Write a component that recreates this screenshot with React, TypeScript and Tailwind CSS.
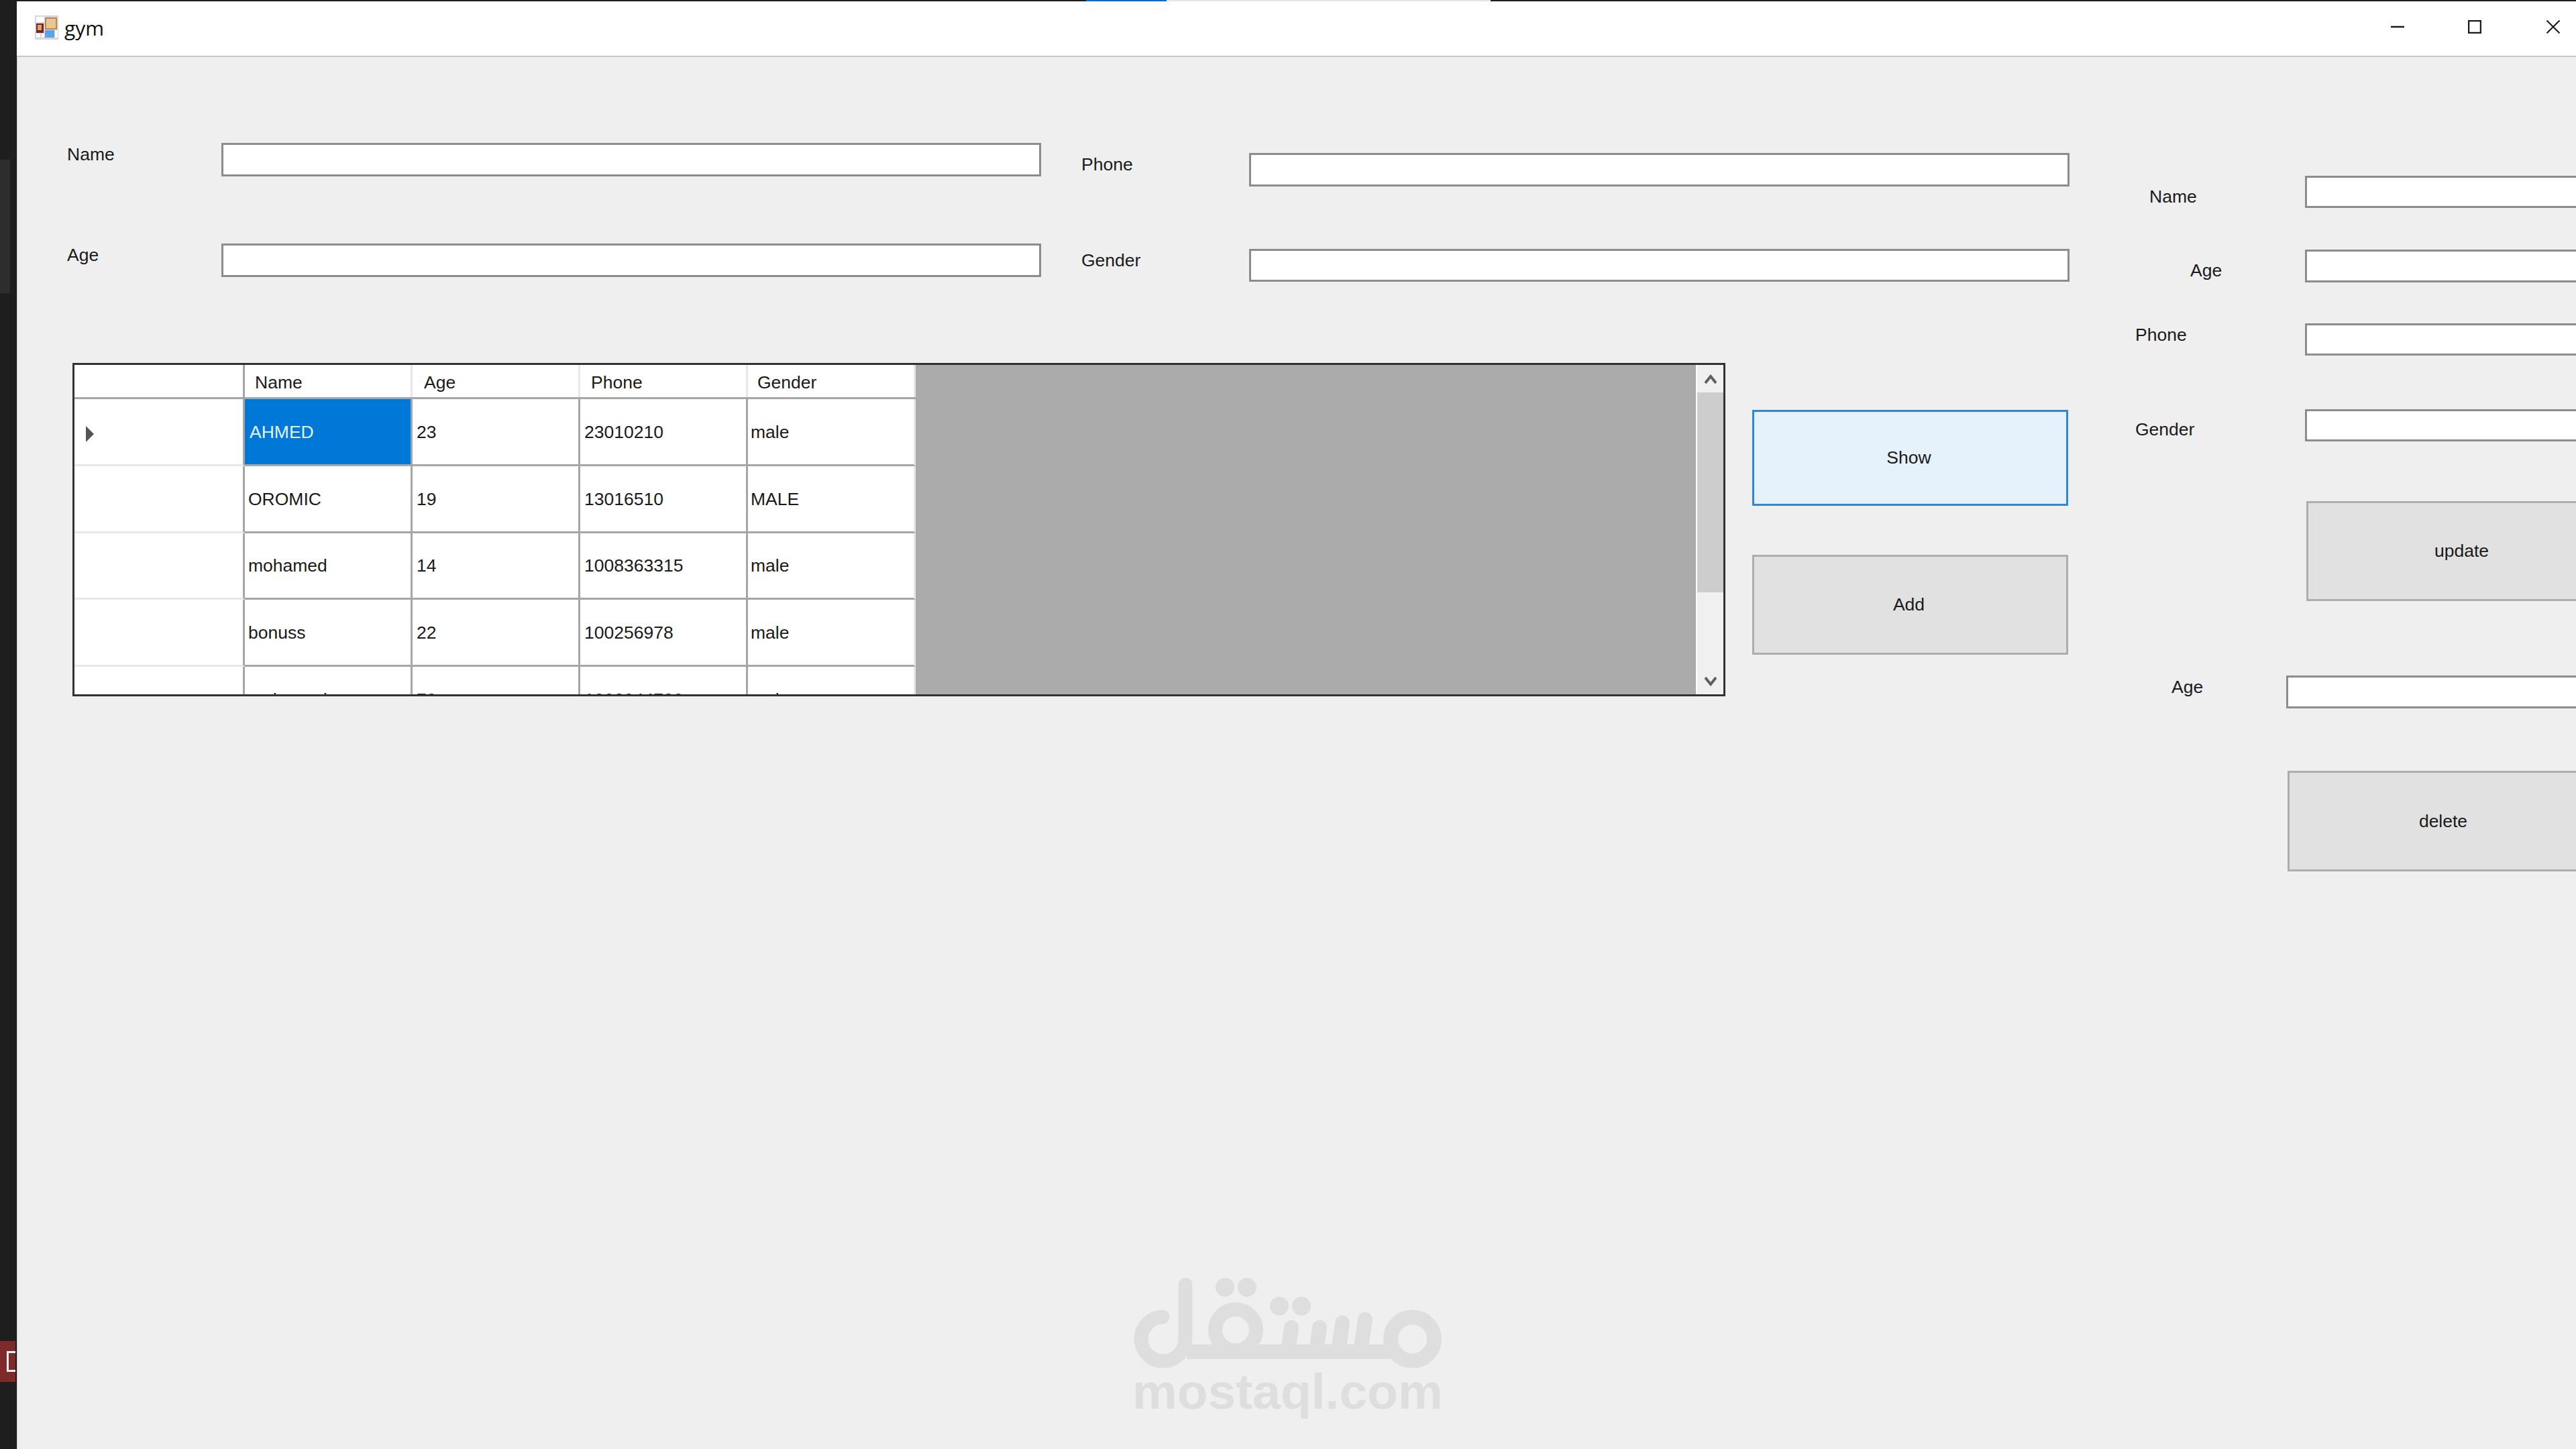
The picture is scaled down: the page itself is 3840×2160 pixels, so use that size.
import React from "react";

const students = [
  { name: "AHMED", age: "23", phone: "23010210", gender: "male" },
  { name: "OROMIC", age: "19", phone: "13016510", gender: "MALE" },
  { name: "mohamed", age: "14", phone: "1008363315", gender: "male" },
  { name: "bonuss", age: "22", phone: "100256978", gender: "male" },
  { name: "mohamed", age: "70", phone: "1002044780", gender: "male" },
];

const AppIcon = () => (
  <svg width="35" height="36" viewBox="0 0 35 36" className="ml-[27px] mb-[4px] shrink-0">
    <rect width="35" height="36" fill="#d6d6d6" />
    <rect x="2" y="2" width="12" height="8" fill="#ffffff" />
    <rect x="15" y="3" width="18" height="18" fill="#b98a4c" />
    <rect x="17" y="5" width="14" height="14" fill="#e9c795" />
    <rect x="2" y="12" width="11" height="14" fill="#7b2323" />
    <rect x="4" y="14" width="6" height="8" fill="#d9a866" />
    <rect x="15" y="22" width="14" height="11" fill="#5aa5ea" />
    <rect x="2" y="27" width="6" height="6" fill="#ffffff" />
    <rect x="10" y="27" width="4" height="6" fill="#ffffff" />
    <rect x="30" y="22" width="4" height="11" fill="#ffffff" />
  </svg>
);

const Logo = () => (
  <svg width="460" height="134" viewBox="0 0 460 134" fill="none" stroke="#dedede" aria-label="مستقل">
    <rect x="80" y="99" width="305" height="22" fill="#dedede" stroke="none" />
    <circle cx="416.5" cy="91" r="32.5" strokeWidth="22" />
    <circle cx="153" cy="77.5" r="30.5" strokeWidth="21" />
    <path d="M44 58 A33 33 0 1 0 78 91 L78 10" strokeWidth="21" strokeLinecap="round" />
    <path d="M236 74 L232 104" strokeWidth="22" strokeLinecap="round" />
    <path d="M278 74 L274 104" strokeWidth="22" strokeLinecap="round" />
    <path d="M312 67 L307 104" strokeWidth="22" strokeLinecap="round" />
    <path d="M346 62 L340 104" strokeWidth="22" strokeLinecap="round" />
    <g fill="#dedede" stroke="none">
      <circle cx="137" cy="14" r="14" />
      <circle cx="170" cy="14" r="14" />
      <circle cx="218" cy="42" r="14" />
      <circle cx="251" cy="42" r="14" />
    </g>
  </svg>
);

const ScrollArrow = ({ down }: { down?: boolean }) => (
  <svg width="18" height="15" viewBox="0 0 18 15" fill="none" stroke="#606060" strokeWidth="4">
    <polyline points={down ? "1,2 9,12 17,2" : "1,13 9,3 17,13"} />
  </svg>
);

const DataGrid = () => (
  <div className="flex w-[2464px] h-[497px] border-[3px] border-[#333333] overflow-hidden shrink-0 bg-[#ababab]">
    <div className="w-[1254px] shrink-0 bg-white">
      <div className="flex h-[51px] border-b-[3px] border-[#a6a6a6]">
        <div className="w-[254px] border-r-[3px] border-[#a6a6a6]" />
        <div className="w-[250px] pl-[15px] pt-[4px] flex items-center border-r-[3px] border-[#e8e8e8]">Name</div>
        <div className="w-[250px] pl-[17px] pt-[4px] flex items-center border-r-[3px] border-[#e8e8e8]">Age</div>
        <div className="w-[250px] pl-[16px] pt-[4px] flex items-center border-r-[3px] border-[#e8e8e8]">Phone</div>
        <div className="w-[250px] pl-[14px] pt-[4px] flex items-center border-r-[3px] border-[#e8e8e8]">Gender</div>
      </div>
      {students.map((s, index) => (
        <div className="flex h-[99.75px] shrink-0" key={index}>
          <div className="w-[254px] flex items-center pl-[17px] pt-[7px] border-r-[3px] border-b-[3px] border-r-[#a6a6a6] border-b-[#e8e8e8]">
            {index === 0 && (
              <svg width="12" height="24" viewBox="0 0 12 24">
                <polygon points="0,0 12,12 0,24" fill="#555555" />
              </svg>
            )}
          </div>
          {index === 0 ? (
            <div className="w-[250px] flex items-center pl-[7px] pt-[2px] bg-[#0078d7] text-[#e6f2fb] border-r-[3px] border-b-[3px] border-[#a6a6a6]">
              {s.name}
            </div>
          ) : (
            <div className="w-[250px] flex items-center pl-[5px] pt-[2px] border-r-[3px] border-b-[3px] border-[#a6a6a6]">
              {s.name}
            </div>
          )}
          <div className="w-[250px] flex items-center pl-[6px] pt-[2px] border-r-[3px] border-b-[3px] border-[#a6a6a6]">{s.age}</div>
          <div className="w-[250px] flex items-center pl-[6px] pt-[2px] border-r-[3px] border-b-[3px] border-[#a6a6a6]">{s.phone}</div>
          <div className="w-[250px] flex items-center pl-[4px] pt-[2px] border-r-[3px] border-b-[3px] border-r-[#e8e8e8] border-b-[#a6a6a6]">{s.gender}</div>
        </div>
      ))}
    </div>
    <div className="flex-1" />
    <div className="w-[41px] shrink-0 flex flex-col bg-[#f0f0f0] border-l-2 border-white">
      <div className="h-[41px] flex items-center justify-center pt-[2px]">
        <ScrollArrow />
      </div>
      <div className="h-[298px] bg-[#cdcdcd]" />
      <div className="flex-1" />
      <div className="h-[41px] flex items-center justify-center pt-[1px]">
        <ScrollArrow down />
      </div>
    </div>
  </div>
);

const App = () => {
  return (
    <div className="flex w-[3840px] h-[2160px] overflow-hidden bg-[#1e1e1e] text-[26.5px] leading-[35px] text-[#1a1a1a] font-['Liberation_Sans',sans-serif]">
      {/* editor behind the window */}
      <div className="w-[25px] shrink-0 flex flex-col pt-[238px]">
        <div className="w-[15px] h-[199px] bg-[#2d2d2d]" />
        <div className="mt-[1562px] w-[23px] h-[61px] bg-[#7f2a2a] flex items-center justify-end">
          <div className="w-[13px] h-[31px] border-[3px] border-r-0 border-[#f0f0f0]" />
        </div>
      </div>

      <div className="flex-1 flex flex-col min-w-0">
        <div className="h-[2px] shrink-0 flex pl-[1594px]">
          <div className="w-[120px] h-[3px] bg-[#0a6cd0]" />
          <div className="w-[483px] h-[3px] bg-[#e5e5e5]" />
        </div>

        {/* title bar */}
        <div className="h-[83px] shrink-0 flex items-center bg-white border-b-2 border-[#c6c6c6]">
          <AppIcon />
          <span className="ml-[9px] mb-[2px] text-[30px] text-[#111111] font-['Open_Sans',sans-serif]">gym</span>
          <div className="ml-auto mb-[6px] flex items-center gap-[95px] pr-[24px]">
            <svg width="20" height="20" viewBox="0 0 20 20" stroke="#1a1a1a" strokeWidth="2.5">
              <line x1="0" y1="10" x2="20" y2="10" />
            </svg>
            <svg width="20" height="20" viewBox="0 0 20 20" fill="none" stroke="#1a1a1a" strokeWidth="2.5">
              <rect x="1" y="1" width="18" height="18" />
            </svg>
            <svg width="20" height="20" viewBox="0 0 20 20" stroke="#1a1a1a" strokeWidth="2" className="ml-[2px]">
              <line x1="0.5" y1="0.5" x2="19.5" y2="19.5" />
              <line x1="19.5" y1="0.5" x2="0.5" y2="19.5" />
            </svg>
          </div>
        </div>

        {/* form */}
        <div className="relative flex-1 flex bg-[#efefef] border-l border-[#c8c8c8] overflow-hidden">
          <div className="w-[3059px] shrink-0 flex flex-col">
            <div className="flex h-[335px] shrink-0">
              <div className="w-[1526px] shrink-0 pl-[74px] pt-[128px]">
                <div className="flex">
                  <label className="w-[230px]">Name</label>
                  <div className="w-[1222px] h-[50px] bg-white border-[3px] border-[#8c8c8c]" />
                </div>
                <div className="flex mt-[100px]">
                  <label className="w-[230px]">Age</label>
                  <div className="w-[1222px] h-[50px] bg-white border-[3px] border-[#8c8c8c]" />
                </div>
              </div>
              <div className="flex-1 pl-[60px] pt-[143px]">
                <div className="flex">
                  <label className="w-[250px]">Phone</label>
                  <div className="w-[1223px] h-[50px] bg-white border-[3px] border-[#8c8c8c]" />
                </div>
                <div className="flex mt-[93px]">
                  <label className="w-[250px]">Gender</label>
                  <div className="w-[1223px] h-[49px] bg-white border-[3px] border-[#8c8c8c]" />
                </div>
              </div>
            </div>

            <div className="flex mt-[121px] ml-[82px]">
              <DataGrid />
              <div className="ml-[40px] pt-[70px] w-[471px] shrink-0">
                <button className="w-full h-[143px] pr-[4px] bg-[#e5f1fb] border-[3px] border-[#2b88dc]">Show</button>
                <button className="w-full h-[149px] mt-[73px] pr-[4px] bg-[#e1e1e1] border-[3px] border-[#adadad]">Add</button>
              </div>
            </div>
          </div>

          <div className="flex-1 min-w-0 pt-[177px] overflow-hidden">
            <div className="flex pl-[119px]">
              <label className="w-[232px] shrink-0 mt-[14px]">Name</label>
              <div className="w-[500px] h-[48px] shrink-0 bg-white border-[3px] border-[#8c8c8c]" />
            </div>
            <div className="flex pl-[180px] mt-[61px]">
              <label className="w-[171px] shrink-0 mt-[14px]">Age</label>
              <div className="w-[500px] h-[49px] shrink-0 bg-white border-[3px] border-[#8c8c8c]" />
            </div>
            <div className="flex pl-[98px] mt-[61px]">
              <label className="w-[253px] shrink-0">Phone</label>
              <div className="w-[500px] h-[48px] shrink-0 bg-white border-[3px] border-[#8c8c8c]" />
            </div>
            <div className="flex pl-[98px] mt-[80px]">
              <label className="w-[253px] shrink-0 mt-[13px]">Gender</label>
              <div className="w-[500px] h-[48px] shrink-0 bg-white border-[3px] border-[#8c8c8c]" />
            </div>
            <button className="block w-[463px] h-[149px] ml-[353px] mt-[89px] bg-[#e1e1e1] border-[3px] border-[#adadad]">update</button>
            <div className="flex pl-[152px] mt-[111px]">
              <label className="w-[171px] shrink-0">Age</label>
              <div className="w-[500px] h-[49px] shrink-0 bg-white border-[3px] border-[#8c8c8c]" />
            </div>
            <button className="block w-[464px] h-[150px] ml-[325px] mt-[93px] bg-[#e1e1e1] border-[3px] border-[#adadad]">delete</button>
          </div>

          {/* watermark */}
          <div className="absolute left-[1662px] top-[1820px] flex flex-col items-center">
            <Logo />
            <span className="mt-[-2px] text-[75px] leading-[75px] font-bold text-[#dedede]">mostaql.com</span>
          </div>
        </div>
      </div>
    </div>
  );
};

export default App;
